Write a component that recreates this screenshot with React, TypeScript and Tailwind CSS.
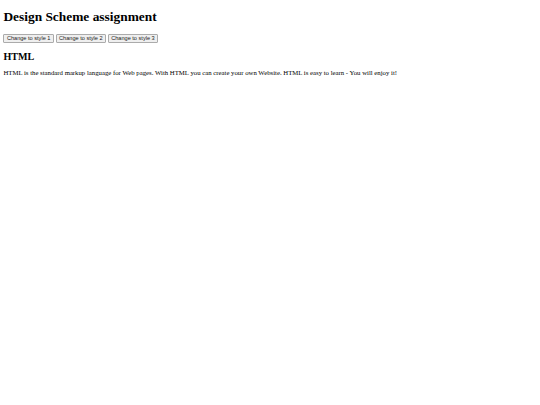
export default function App() {
  const styles = ['Change to style 1', 'Change to style 2', 'Change to style 3'];

  return (
    <div className="min-h-[405px] bg-white px-[3.4px] pt-[9px] text-black font-['Liberation_Serif',serif]">
      <h1 className="text-[13.4px] font-bold leading-[15.5px]">Design Scheme assignment</h1>

      {/* style switcher */}
      <div className="mt-[9px] flex gap-[1.6px]">
        {styles.map((label) => (
          <button
            key={label}
            className="h-[9px] rounded-[1px] border border-[#ababab] bg-[#efefef] px-[2.5px] text-[5.6px] leading-[7px] text-[#222] font-['Liberation_Sans',sans-serif]"
          >
            {label}
          </button>
        ))}
      </div>

      <h2 className="mt-[8.4px] text-[10.1px] font-bold leading-[11.6px]">HTML</h2>
      <p className="mt-[6.75px] text-[6.75px] leading-[7.8px]">
        HTML is the standard markup language for Web pages. With HTML you can create your own Website. HTML is easy to
        learn - You will enjoy it!
      </p>
    </div>
  );
}
